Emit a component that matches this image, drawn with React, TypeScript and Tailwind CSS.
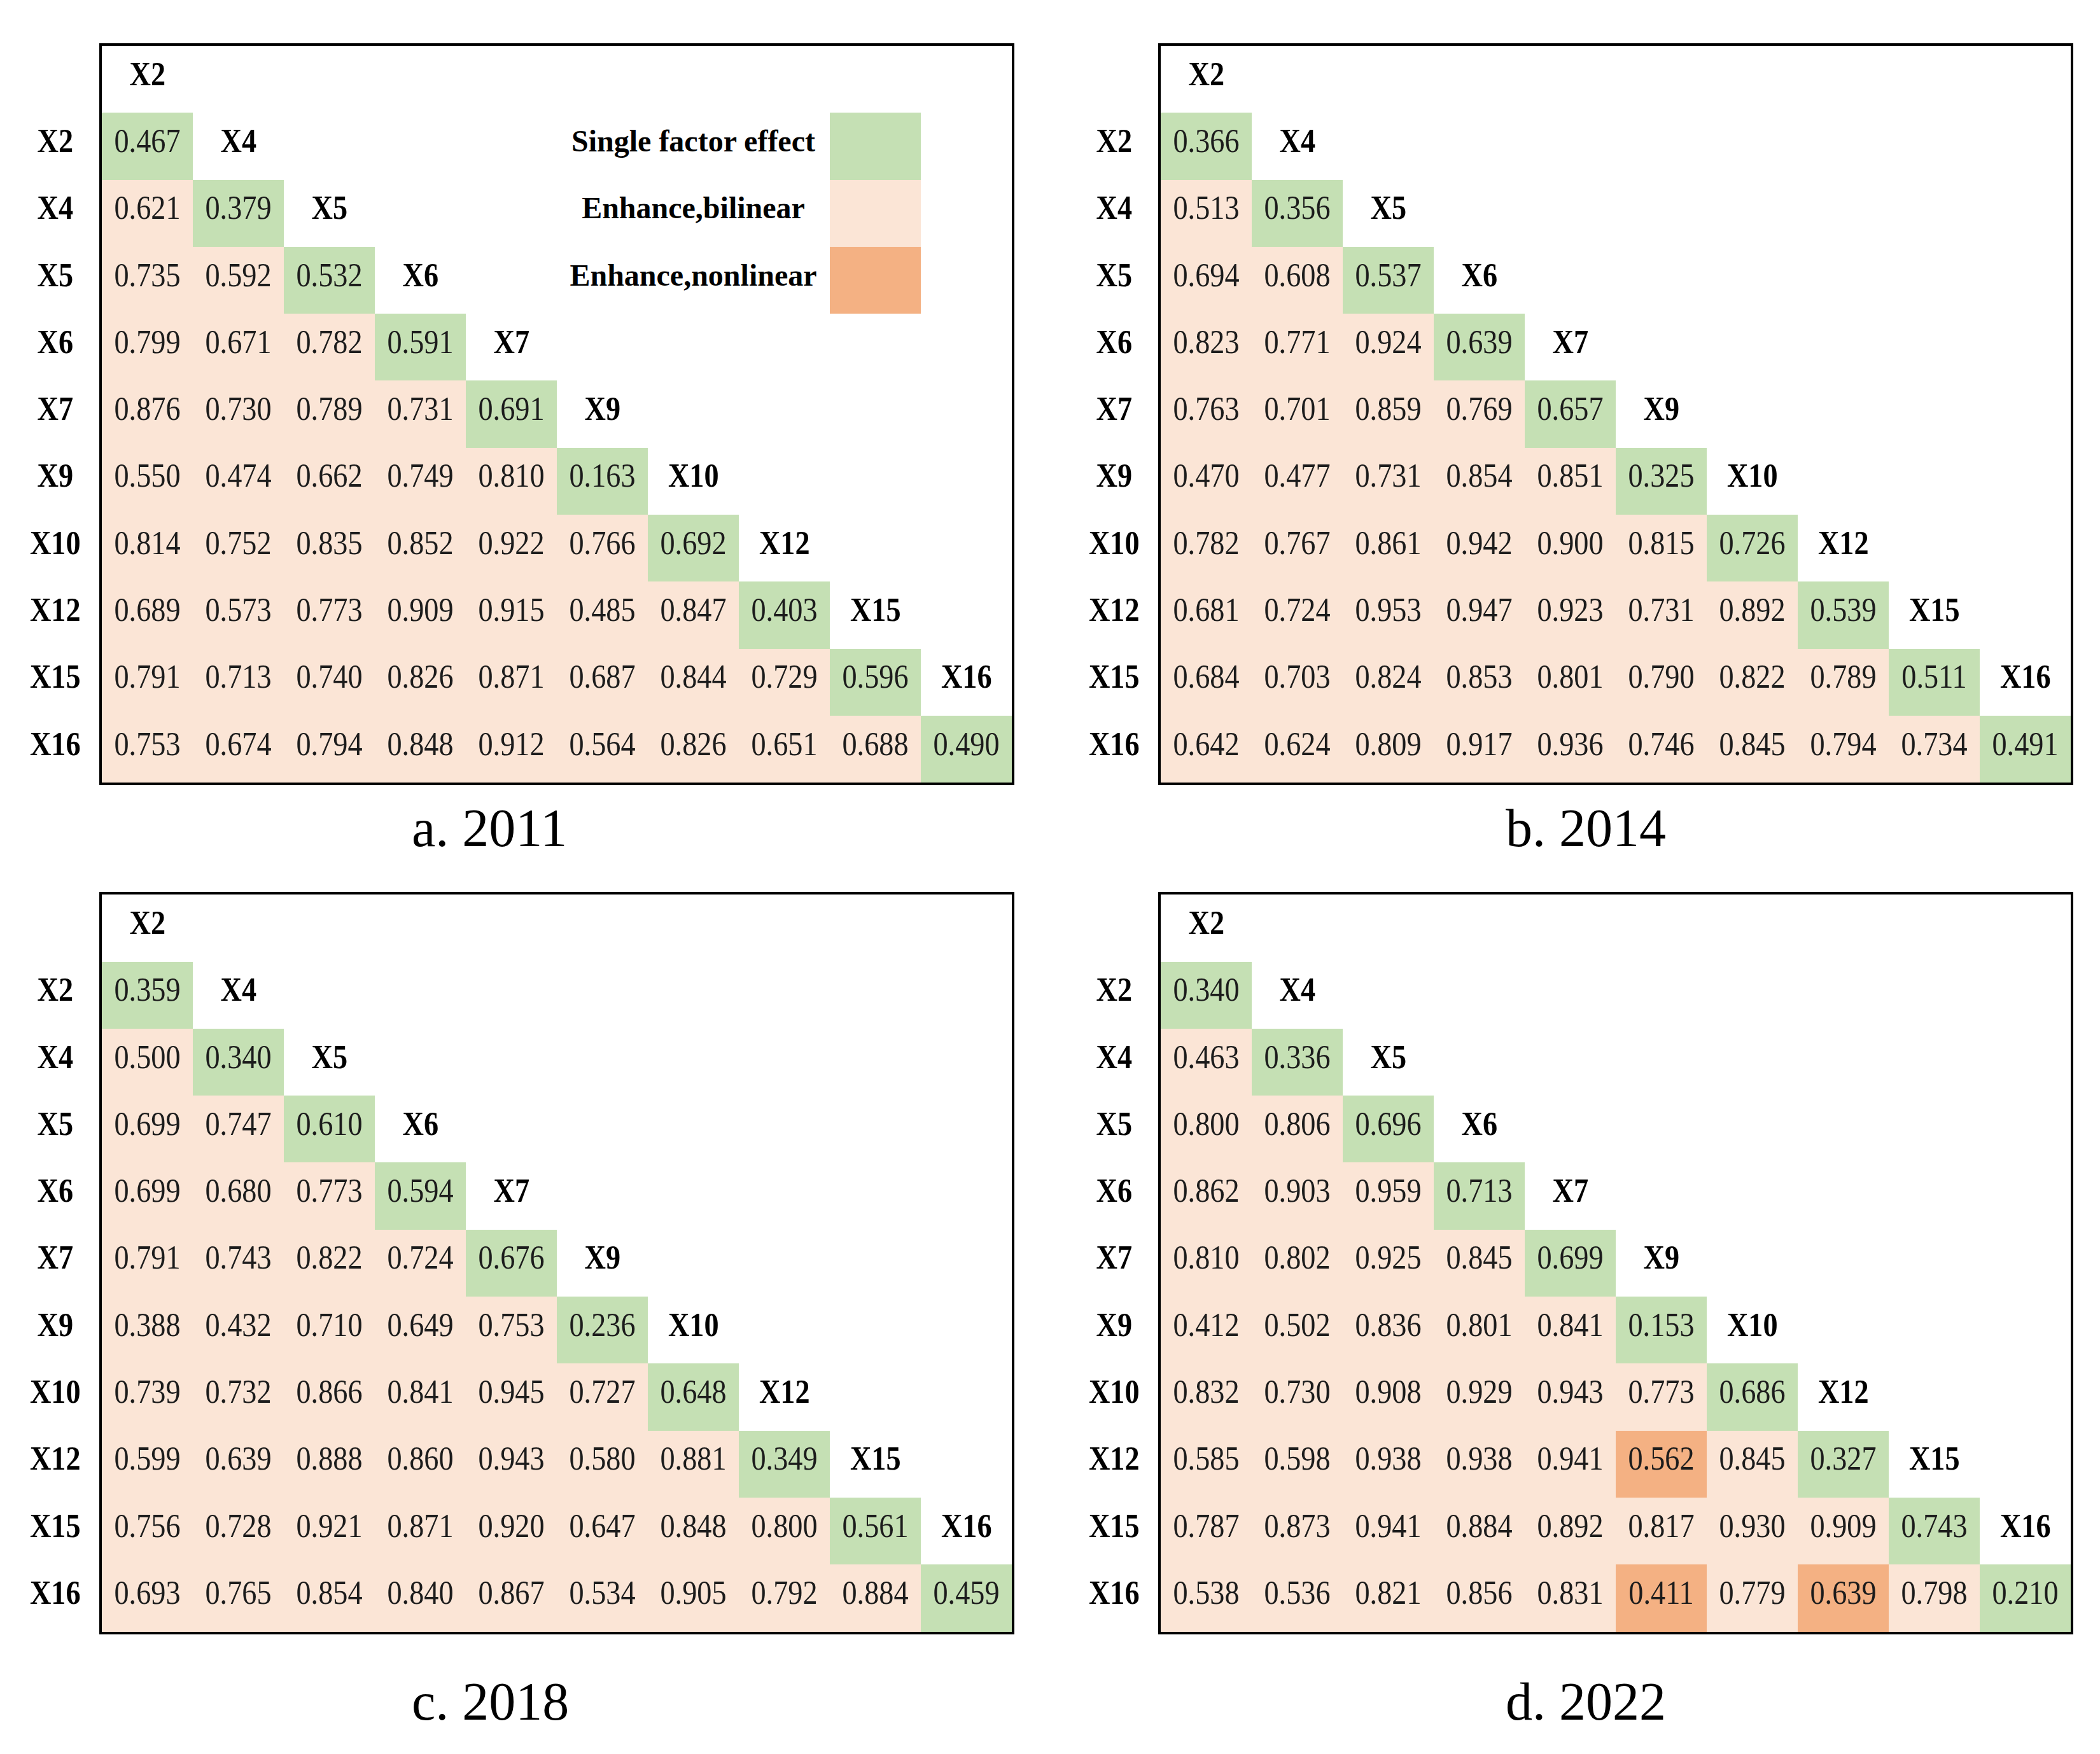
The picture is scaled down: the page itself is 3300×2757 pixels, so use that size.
import React from "react";

type Panel = {
  caption: string;
  captionPad: string;
  values: string[][];
  nonlinear?: string[];
  legend?: boolean;
};

const VARS = ["X2", "X4", "X5", "X6", "X7", "X9", "X10", "X12", "X15", "X16"];

const parse = (rows: string[]) => rows.map((r) => r.trim().split(/\s+/));

const panels: Panel[] = [
  {
    caption: "a. 2011",
    captionPad: "pl-[629px]",
    legend: true,
    values: parse([
      "0.467",
      "0.621 0.379",
      "0.735 0.592 0.532",
      "0.799 0.671 0.782 0.591",
      "0.876 0.730 0.789 0.731 0.691",
      "0.550 0.474 0.662 0.749 0.810 0.163",
      "0.814 0.752 0.835 0.852 0.922 0.766 0.692",
      "0.689 0.573 0.773 0.909 0.915 0.485 0.847 0.403",
      "0.791 0.713 0.740 0.826 0.871 0.687 0.844 0.729 0.596",
      "0.753 0.674 0.794 0.848 0.912 0.564 0.826 0.651 0.688 0.490",
    ]),
  },
  {
    caption: "b. 2014",
    captionPad: "pl-[684px]",
    values: parse([
      "0.366",
      "0.513 0.356",
      "0.694 0.608 0.537",
      "0.823 0.771 0.924 0.639",
      "0.763 0.701 0.859 0.769 0.657",
      "0.470 0.477 0.731 0.854 0.851 0.325",
      "0.782 0.767 0.861 0.942 0.900 0.815 0.726",
      "0.681 0.724 0.953 0.947 0.923 0.731 0.892 0.539",
      "0.684 0.703 0.824 0.853 0.801 0.790 0.822 0.789 0.511",
      "0.642 0.624 0.809 0.917 0.936 0.746 0.845 0.794 0.734 0.491",
    ]),
  },
  {
    caption: "c. 2018",
    captionPad: "pl-[629px]",
    values: parse([
      "0.359",
      "0.500 0.340",
      "0.699 0.747 0.610",
      "0.699 0.680 0.773 0.594",
      "0.791 0.743 0.822 0.724 0.676",
      "0.388 0.432 0.710 0.649 0.753 0.236",
      "0.739 0.732 0.866 0.841 0.945 0.727 0.648",
      "0.599 0.639 0.888 0.860 0.943 0.580 0.881 0.349",
      "0.756 0.728 0.921 0.871 0.920 0.647 0.848 0.800 0.561",
      "0.693 0.765 0.854 0.840 0.867 0.534 0.905 0.792 0.884 0.459",
    ]),
  },
  {
    caption: "d. 2022",
    captionPad: "pl-[684px]",
    nonlinear: ["7-5", "9-5", "9-7"],
    values: parse([
      "0.340",
      "0.463 0.336",
      "0.800 0.806 0.696",
      "0.862 0.903 0.959 0.713",
      "0.810 0.802 0.925 0.845 0.699",
      "0.412 0.502 0.836 0.801 0.841 0.153",
      "0.832 0.730 0.908 0.929 0.943 0.773 0.686",
      "0.585 0.598 0.938 0.938 0.941 0.562 0.845 0.327",
      "0.787 0.873 0.941 0.884 0.892 0.817 0.930 0.909 0.743",
      "0.538 0.536 0.821 0.856 0.831 0.411 0.779 0.639 0.798 0.210",
    ]),
  },
];

const LEGEND = [
  { label: "Single factor effect", color: "bg-[#c5e0b4]" },
  { label: "Enhance,bilinear", color: "bg-[#fbe5d6]" },
  { label: "Enhance,nonlinear", color: "bg-[#f4b183]" },
];

const Cell = ({ bg, bold, text }: { bg?: string; bold?: boolean; text?: string }) => (
  <div className={`w-[143px] h-full pb-[16px] flex items-center justify-center ${bg ?? ""}`}>
    {text && (
      <span
        className={`inline-block scale-x-[0.89] text-[52px] leading-none ${
          bold ? "font-bold text-black" : "text-[#1c1c1c]"
        }`}
      >
        {text}
      </span>
    )}
  </div>
);

// one matrix row; r = 0 is the header row holding only X2
const MatrixRow = ({ panel, r }: { panel: Panel; r: number }) => {
  const cells: React.ReactNode[] = [];
  const legendItem = panel.legend && r >= 1 && r <= 3 ? LEGEND[r - 1] : null;

  for (let c = 0; c < 10; c++) {
    if (legendItem && c === 5) {
      cells.push(
        <div key="legend" className="w-[429px] h-full pb-[16px] flex items-center justify-center">
          <span className="text-[48px] font-bold text-black leading-none">{legendItem.label}</span>
        </div>
      );
      c = 7;
      continue;
    }
    if (legendItem && c === 8) {
      cells.push(<Cell key={c} bg={legendItem.color} />);
      continue;
    }
    const i = r - 1;
    if (r === c) {
      cells.push(<Cell key={c} bold text={VARS[c]} />);
    } else if (i === c) {
      cells.push(<Cell key={c} bg="bg-[#c5e0b4]" text={panel.values[i][c]} />);
    } else if (i > c) {
      const strong = panel.nonlinear?.includes(`${i}-${c}`);
      cells.push(
        <Cell key={c} bg={strong ? "bg-[#f4b183]" : "bg-[#fbe5d6]"} text={panel.values[i][c]} />
      );
    } else {
      cells.push(<Cell key={c} />);
    }
  }

  return <div className="flex h-[105.3px]">{cells}</div>;
};

const Figure = ({ panel, top }: { panel: Panel; top: boolean }) => (
  <div className="flex flex-col">
    <div className="flex">
      <div className="w-[138px] pt-[4px] flex flex-col">
        <div className="h-[105.3px]" />
        {VARS.map((v) => (
          <div key={v} className="h-[105.3px] pb-[16px] flex items-center justify-center">
            <span className="inline-block scale-x-[0.89] text-[52px] font-bold leading-none text-black">
              {v}
            </span>
          </div>
        ))}
      </div>
      <div className="border-4 border-black">
        {Array.from({ length: 11 }, (_, r) => (
          <MatrixRow key={r} panel={panel} r={r} />
        ))}
      </div>
    </div>
    <div
      className={`${panel.captionPad} ${
        top ? "pt-[26px] h-[168px]" : "pt-[64px]"
      } text-[84px] leading-[84px] text-black`}
    >
      {panel.caption}
    </div>
  </div>
);

export default function App() {
  return (
    <div className="w-[3300px] h-[2757px] bg-white font-['Liberation_Serif','Times_New_Roman',serif]">
      <div className="grid grid-cols-[1576px_1576px] gap-x-[88px] pl-[18px] pt-[68px]">
        {panels.map((p, i) => (
          <Figure key={p.caption} panel={p} top={i < 2} />
        ))}
      </div>
    </div>
  );
}
